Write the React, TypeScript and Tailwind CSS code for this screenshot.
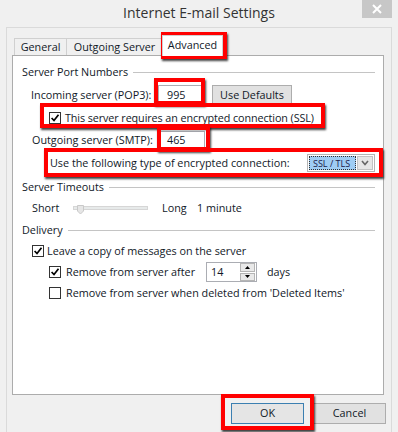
import React from "react";

function Check({ checked }: { checked: boolean }) {
  return (
    <span className="w-[12px] h-[12px] border border-[#333333] bg-white flex items-center justify-center shrink-0">
      {checked && (
        <svg width="10" height="10" viewBox="0 0 10 10">
          <path d="M1.6 5 L4 7.5 L8.5 1.7" stroke="#000" strokeWidth="1.7" fill="none" />
        </svg>
      )}
    </span>
  );
}

function GroupHeader({ label }: { label: string }) {
  return (
    <div className="flex items-center h-[16px] pl-[9px]">
      <span className="whitespace-nowrap">{label}</span>
      <span className="flex-1 h-px bg-[#c4c4c4] ml-[5px]" />
    </div>
  );
}

function RedBox({ cls }: { cls: string }) {
  return (
    <div
      className={
        "absolute border-[4px] border-[#ff0000] shadow-[1px_2px_2px_rgba(0,0,0,0.75)] pointer-events-none " + cls
      }
    />
  );
}

export default function App() {
  return (
    <div className="w-[398px] h-[432px] bg-[#f0f0f0] relative overflow-hidden font-['Open_Sans',sans-serif] text-[10.8px] text-[#111827] leading-none">
      {/* title bar */}
      <div className="h-[27px] grid grid-cols-[1fr_auto_1fr] items-start">
        <div />
        <div className="text-[14px] text-[#333333] pt-[4px] leading-[18px]">Internet E-mail Settings</div>
        <div className="flex justify-end pr-[6px]">
          <div className="w-[30px] h-[18px] bg-[#c7c7c7] flex items-center justify-center">
            <svg width="10" height="10" viewBox="0 0 10 10">
              <path d="M1 1 L9 9 M9 1 L1 9" stroke="#ffffff" strokeWidth="2" />
            </svg>
          </div>
        </div>
      </div>

      {/* frame */}
      <div className="mx-[6px] h-[405px] border border-b-0 border-[#dadada] pl-[5px] pr-[7px] pt-[7px] flex flex-col">
        {/* tabs */}
        <div className="h-[20px] flex items-end pl-[2px]">
          <div className="w-[53px] h-[17px] border border-b-0 border-[#d0d0d0] flex items-center justify-center">
            General
          </div>
          <div className="w-[96px] h-[17px] border border-l-0 border-b-0 border-[#d0d0d0] flex items-center justify-center">
            Outgoing Server
          </div>
          <div className="w-[61px] h-[21px] -ml-px -mb-px relative z-10 bg-white border border-b-0 border-[#d0d0d0] flex items-center justify-center pb-[2px]">
            Advanced
          </div>
        </div>

        {/* panel */}
        <div className="h-[340px] border border-[#acacac] bg-white flex flex-col pr-[8px]">
          <div className="mt-[8px]">
            <GroupHeader label="Server Port Numbers" />
          </div>

          <div className="mt-[5px] h-[20px] flex items-center pl-[18px]">
            <span className="w-[127px] shrink-0 whitespace-nowrap">Incoming server (POP3):</span>
            <div className="w-[47px] h-[20px] border border-[#abadb3] bg-white flex items-center pl-[8px]">995</div>
            <div className="ml-[7px] w-[80px] h-[20px] border border-[#adadad] bg-[#e1e1e1] flex items-center justify-center">
              Use Defaults
            </div>
          </div>

          <div className="mt-[5px] h-[16px] flex items-center pl-[36px]">
            <Check checked />
            <span className="ml-[4px] whitespace-nowrap tracking-[-0.1px]">
              This server requires an encrypted connection (SSL)
            </span>
          </div>

          <div className="mt-[4px] h-[20px] flex items-center pl-[19px]">
            <span className="w-[126px] shrink-0 whitespace-nowrap">Outgoing server (SMTP):</span>
            <div className="w-[47px] h-[19px] border border-[#abadb3] bg-white flex items-center pl-[8px]">465</div>
          </div>

          <div className="mt-[4px] h-[18px] flex items-center pl-[37px]">
            <span className="w-[257px] shrink-0 whitespace-nowrap">Use the following type of encrypted connection:</span>
            <div className="w-[68px] h-[18px] border border-[#b5b5b5] bg-white flex items-stretch p-px">
              <div className="flex-1 border border-dotted border-[#333333] bg-[#9fcdf4] flex items-center pl-[3px] text-[9px] text-[#1a1a4a]">
                SSL / TLS
              </div>
              <div className="w-[16px] ml-px bg-[#e6e6e6] border border-[#c3c3c3] flex items-center justify-center">
                <svg width="8" height="6" viewBox="0 0 8 6">
                  <path d="M1 1 L4 4.5 L7 1" stroke="#666" strokeWidth="1.6" fill="none" />
                </svg>
              </div>
            </div>
          </div>

          <div className="mt-[7px]">
            <GroupHeader label="Server Timeouts" />
          </div>

          <div className="mt-[5px] h-[16px] flex items-center pl-[19px]">
            <span className="w-[41px] shrink-0">Short</span>
            <div className="relative w-[75px] h-[4px] bg-[#e7eaea] border border-[#d6d6d6]">
              <svg className="absolute left-[3px] -top-[2px]" width="7" height="10" viewBox="0 0 7 10">
                <path d="M0.5 0.5 H6.5 V6 L3.5 9 L0.5 6 Z" fill="#e6e6e6" stroke="#c9c9c9" />
              </svg>
            </div>
            <span className="ml-[14px] w-[35px] shrink-0">Long</span>
            <span>1 minute</span>
          </div>

          <div className="mt-[6px]">
            <GroupHeader label="Delivery" />
          </div>

          <div className="mt-[5px] h-[16px] flex items-center pl-[19px]">
            <Check checked />
            <span className="ml-[3px] whitespace-nowrap">Leave a copy of messages on the server</span>
          </div>

          <div className="mt-[3px] h-[20px] flex items-center pl-[36px]">
            <Check checked />
            <span className="ml-[5px] w-[140px] shrink-0 whitespace-nowrap">Remove from server after</span>
            <div className="w-[51px] h-[20px] border border-[#abadb3] bg-white flex items-center">
              <span className="pl-[4px] flex-1">14</span>
              <div className="w-[15px] h-[18px] mr-px flex flex-col gap-px">
                <div className="flex-1 bg-[#e9e9e9] border border-[#b5b5b5] flex items-center justify-center">
                  <svg width="5" height="3" viewBox="0 0 5 3">
                    <path d="M0 3 L2.5 0 L5 3 Z" fill="#000" />
                  </svg>
                </div>
                <div className="flex-1 bg-[#e9e9e9] border border-[#b5b5b5] flex items-center justify-center">
                  <svg width="5" height="3" viewBox="0 0 5 3">
                    <path d="M0 0 L2.5 3 L5 0 Z" fill="#000" />
                  </svg>
                </div>
              </div>
            </div>
            <span className="ml-[10px]">days</span>
          </div>

          <div className="mt-[3px] h-[16px] flex items-center pl-[36px]">
            <Check checked={false} />
            <span className="ml-[5px] whitespace-nowrap">Remove from server when deleted from 'Deleted Items'</span>
          </div>
        </div>

        {/* buttons */}
        <div className="mt-[8px] flex justify-end gap-[9px] -mr-[2px]">
          <div className="w-[73px] h-[21px] border border-[#3c7fb1] bg-[#e5e5e5] flex items-center justify-center">OK</div>
          <div className="w-[73px] h-[21px] border border-[#adadad] bg-[#e1e1e1] flex items-center justify-center">
            Cancel
          </div>
        </div>
      </div>

      {/* red annotation boxes */}
      <RedBox cls="left-[161px] top-[32px] w-[66px] h-[27px]" />
      <RedBox cls="left-[154px] top-[78px] w-[51px] h-[27px]" />
      <RedBox cls="left-[40px] top-[103px] w-[285px] h-[25px]" />
      <RedBox cls="left-[157px] top-[126px] w-[53px] h-[25px]" />
      <RedBox cls="left-[44px] top-[148px] w-[339px] h-[29px]" />
      <RedBox cls="left-[221px] top-[394px] w-[93px] h-[36px]" />
    </div>
  );
}
